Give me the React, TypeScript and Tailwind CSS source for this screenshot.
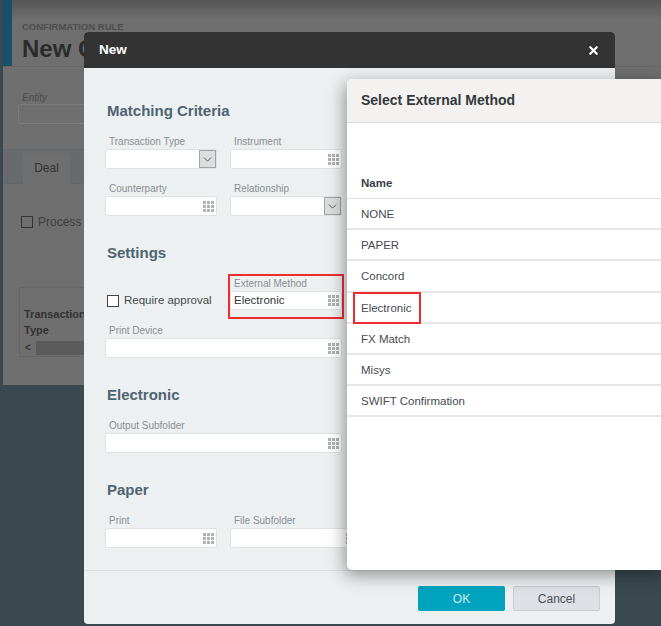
import { ChevronDown, X } from 'lucide-react';

const font = 'font-["Liberation_Sans",Arial,sans-serif]';

function GridIcon() {
  return (
    <svg width="11" height="11" viewBox="0 0 11 11" className="shrink-0">
      {[0, 4, 8].map((y) =>
        [0, 4, 8].map((x) => <rect key={`${x}-${y}`} x={x} y={y} width="3" height="3" fill="#b0b3b5" />)
      )}
    </svg>
  );
}

function Label({ children }: { children: string }) {
  return <div className="h-[15px] pl-[4px] text-[10px] leading-[16px] text-[#8a8e91]">{children}</div>;
}

function LookupField({ label, value, width, height = 'h-[20px]' }: { label: string; value?: string; width: string; height?: string }) {
  return (
    <div className={width}>
      <Label>{label}</Label>
      <div className={`flex ${height} items-center justify-between rounded-[2px] border border-[#dfe2e4] bg-white pl-[3px] pr-[2px] text-[11.5px] text-[#33383b]`}>
        <span>{value}</span>
        <GridIcon />
      </div>
    </div>
  );
}

function SelectField({ label, width }: { label: string; width: string }) {
  return (
    <div className={width}>
      <Label>{label}</Label>
      <div className="flex h-[20px] justify-end rounded-[2px] border border-[#dfe2e4] bg-white">
        <div className="flex w-[17px] items-center justify-center border border-[#a0a3a3] bg-[#dcdede]">
          <ChevronDown size={13} strokeWidth={1.6} className="text-[#444]" />
        </div>
      </div>
    </div>
  );
}

function SectionTitle({ children, className }: { children: string; className: string }) {
  return <h2 className={`pl-[2px] text-[15px] font-bold leading-[20px] text-[#4f6473] ${className}`}>{children}</h2>;
}

const methods = ['NONE', 'PAPER', 'Concord', 'Electronic', 'FX Match', 'Misys', 'SWIFT Confirmation'];

export default function App() {
  return (
    <div className={`relative h-[626px] w-[661px] overflow-hidden bg-[#3a4950] ${font}`}>
      {/* Dimmed page behind the dialog */}
      <div className="ml-[3px] h-[385px] w-[658px] bg-[#6f6f6f]">
        <div className="h-[19px] bg-gradient-to-b from-[#555] to-[#6f6f6f]" />
        <div className="flex h-[48px] border-b border-[#666]">
          <div className="-mt-[19px] w-[9px] bg-[#16506b]" />
          <div className="pl-[10px]">
            <div className="mt-[2px] text-[9.5px] leading-[12px] font-bold text-[#4d4d4d]">CONFIRMATION RULE</div>
            <div className="mt-[2px] text-[24px] leading-[28px] font-bold text-[#2b2b2b]">New C</div>
          </div>
        </div>
        <div className="h-[82px] pl-[15px] pt-[25px]">
          <div className="pl-[4px] text-[10px] italic leading-[12px] text-[#4d4d4d]">Entity</div>
          <div className="h-[20px] w-[200px] rounded-[2px] border border-[#7c7c7c]" />
        </div>
        <div className="h-[35px] border-y border-[#666] bg-[#676b6d] pl-[20px] pt-[3px]">
          <div className="flex h-[31px] w-[47px] items-center justify-center rounded-t-[2px] bg-[#6f6f6f] pb-[2px] text-[12px] text-[#333]">Deal</div>
        </div>
        <div className="flex items-center gap-[5px] pl-[18px] pt-[29px]">
          <div className="h-[12px] w-[12px] border border-[#333]" />
          <span className="text-[12px] text-[#3d3d3d]">Process</span>
        </div>
        <div className="ml-[16px] mt-[56px] h-[70px] w-[200px] border border-[#666] pl-[4px] pt-[18px]">
          <div className="text-[11px] font-bold leading-[16px] text-[#333]">Transaction<br />Type</div>
          <div className="mt-[3px] flex h-[14px] -ml-[4px] items-center">
            <span className="w-[16px] pl-[5px] text-[10px] font-bold leading-none text-[#333]">&lt;</span>
            <div className="h-full flex-1 bg-[#5b5b5b]" />
          </div>
        </div>
      </div>

      {/* New dialog */}
      <div className="absolute left-[84px] top-[32px] flex h-[592px] w-[531px] flex-col overflow-hidden rounded-[4px] bg-[#ecf0f1]">
        <div className="flex h-[36px] items-center justify-between bg-[#333333] pl-[15px] pr-[15px] pt-[1px]">
          <span className="text-[13.5px] font-bold text-white">New</span>
          <X size={13} strokeWidth={4} className="text-white" />
        </div>
        <div className="h-[503px] border-b border-[#dcdfe0] pl-[21px] pt-[33px]">
          <SectionTitle className="">Matching Criteria</SectionTitle>
          <div className="mt-[13px] flex gap-[13px]">
            <SelectField label="Transaction Type" width="w-[112px]" />
            <LookupField label="Instrument" width="w-[112px]" />
          </div>
          <div className="mt-[12px] flex gap-[13px]">
            <LookupField label="Counterparty" width="w-[112px]" />
            <SelectField label="Relationship" width="w-[112px]" />
          </div>
          <SectionTitle className="mt-[27px]">Settings</SectionTitle>
          <div className="mt-[13px] flex items-center gap-[13px]">
            <div className="flex w-[112px] items-center gap-[5px] pl-[2px] pt-[16px]">
              <div className="h-[12px] w-[12px] shrink-0 border border-[#444] bg-white" />
              <span className="whitespace-nowrap text-[11.5px] text-[#44494c]">Require approval</span>
            </div>
            <div className="relative w-[112px]">
              <LookupField label="External Method" value="Electronic" width="w-full" height="h-[19px]" />
              {/* Red callout */}
              <div className="absolute -left-[2px] -top-[2px] h-[45px] w-[116px] border-2 border-[#ee2b2f]" />
            </div>
          </div>
          <div className="mt-[13px]">
            <LookupField label="Print Device" width="w-[237px]" />
          </div>
          <SectionTitle className="mt-[27px]">Electronic</SectionTitle>
          <div className="mt-[13px]">
            <LookupField label="Output Subfolder" width="w-[237px]" />
          </div>
          <SectionTitle className="mt-[27px]">Paper</SectionTitle>
          <div className="mt-[13px] flex gap-[13px]">
            <LookupField label="Print" width="w-[112px]" />
            <LookupField label="File Subfolder" width="w-[130px]" />
          </div>
        </div>
        <div className="flex flex-1 items-center justify-end gap-[8px] pr-[15px] pt-[2px]">
          <button className="h-[25px] w-[87px] rounded-[2px] bg-[#00a3bd] text-[12px] text-[#cfe9ee]">OK</button>
          <button className="h-[25px] w-[87px] rounded-[2px] border border-[#c9cdd1] bg-[#dde0e4] text-[12px] text-[#4a4f55]">Cancel</button>
        </div>
      </div>

      {/* Select External Method panel */}
      <div className="absolute left-[347px] top-[79px] h-[491px] w-[320px] overflow-hidden rounded-[5px] bg-white shadow-[-2px_5px_18px_rgba(0,0,0,0.4)]">
        <div className="flex h-[44px] items-center border-b border-[#dcdcdc] bg-[#f3f2f0] pl-[14px] text-[14px] font-bold text-[#33383d]">
          Select External Method
        </div>
        <div className="flex h-[76px] items-end border-b border-[#e0e0e0] pb-[8px] pl-[14px] text-[11.5px] font-bold leading-[14px] text-[#3a3f45]">
          Name
        </div>
        {methods.map((name) => (
          <div key={name} className="relative flex h-[31.2px] items-center border-b-2 border-[#e6e6e6] pl-[14px] pt-[2px] text-[11.5px] text-[#464b52]">
            {name}
            {name === 'Electronic' && (
              <div className="absolute left-[6px] -top-[1px] h-[32px] w-[68px] border-2 border-[#ee2b2f]" />
            )}
          </div>
        ))}
      </div>
    </div>
  );
}
